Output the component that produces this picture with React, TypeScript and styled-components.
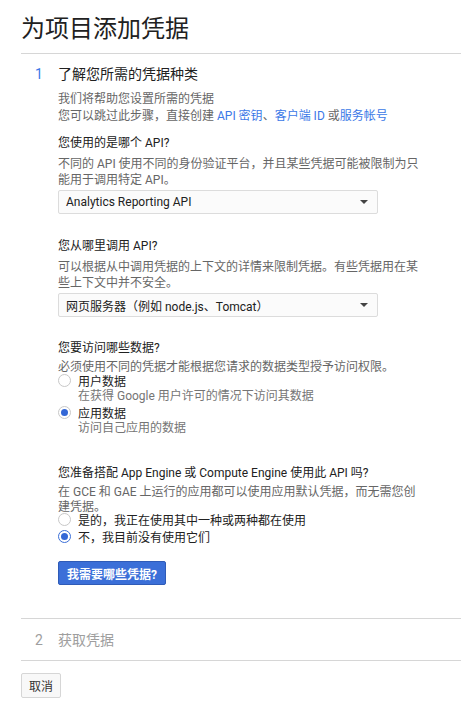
import React from "react";
import styled, { createGlobalStyle } from "styled-components";

const Global = createGlobalStyle`
  html, body { margin: 0; padding: 0; background: #fff; }
  body {
    font-family: Roboto, "Noto Sans CJK SC", "Liberation Sans", sans-serif;
    color: #212121;
    -webkit-font-smoothing: antialiased;
  }
`;

const Page = styled.div`
  padding: 0 13px 0 21px;
`;

const Header = styled.header`
  padding-top: 13px;
  padding-bottom: 7px;
  border-bottom: 1px solid #d6d6d6;
`;

const Title = styled.h1`
  margin: 0;
  font-size: 24px;
  font-weight: 400;
  line-height: 33px;
  color: #212121;
`;

const Step = styled.section<{ $last?: boolean }>`
  padding: ${(p) => (p.$last ? "11px 0 10px" : "10px 0 33px")};
  border-bottom: 1px solid #d6d6d6;
`;

const StepHead = styled.div<{ $muted?: boolean }>`
  display: flex;
  align-items: center;
  height: 20px;
  font-size: 14px;
  line-height: 20px;
  color: ${(p) => (p.$muted ? "#9e9e9e" : "#212121")};
`;

const StepNum = styled.span<{ $muted?: boolean }>`
  width: 37px;
  padding-left: 14px;
  box-sizing: border-box;
  color: ${(p) => (p.$muted ? "#9e9e9e" : "#3b78e7")};
  font-size: 14px;
`;

const StepBody = styled.div`
  padding-left: 37px;
`;

const Intro = styled.p`
  margin: 7px 0 0;
  font-size: 12px;
  line-height: 17px;
  color: #666;
`;

const Link = styled.a`
  color: #3b78e7;
  text-decoration: none;
`;

const Question = styled.div<{ $mt: number }>`
  margin-top: ${(p) => p.$mt}px;
  width: 362px;
`;

const Label = styled.div`
  font-size: 12px;
  line-height: 17px;
  color: #212121;
`;

const Desc = styled.div<{ $mt?: number; $lh?: number }>`
  margin-top: ${(p) => p.$mt ?? 4}px;
  font-size: 12px;
  line-height: ${(p) => p.$lh ?? 16}px;
  color: #666;
`;

const Select = styled.div`
  margin-top: 2px;
  width: 320px;
  height: 24px;
  box-sizing: border-box;
  border: 1px solid #dcdcdc;
  border-radius: 2px;
  background: #fbfbfb;
  display: flex;
  align-items: center;
  justify-content: space-between;
  padding: 0 9px 0 7px;
  font-size: 12px;
  color: #212121;
`;

const Caret = styled.span`
  width: 0;
  height: 0;
  border-left: 4px solid transparent;
  border-right: 4px solid transparent;
  border-top: 4px solid #444;
`;

const RadioGroup = styled.div<{ $mt?: number }>`
  margin-top: ${(p) => p.$mt ?? 0}px;
  display: flex;
  flex-direction: column;
`;

const RadioRow = styled.label<{ $h?: number }>`
  display: flex;
  align-items: center;
  height: ${(p) => p.$h ?? 16}px;
  font-size: 12px;
  color: #212121;
`;

const Circle = styled.span<{ $checked?: boolean; $focus?: boolean }>`
  width: 13px;
  height: 13px;
  box-sizing: border-box;
  border-radius: 50%;
  border: 1px solid ${(p) => (p.$focus ? "#3b6fd8" : "#c8c8c8")};
  background: #fff;
  margin-right: 7px;
  display: flex;
  align-items: center;
  justify-content: center;
  flex: none;
  &::after {
    content: "";
    width: 7px;
    height: 7px;
    border-radius: 50%;
    background: ${(p) => (p.$checked ? "#3367d6" : "transparent")};
  }
`;

const RadioDesc = styled.div`
  padding-left: 20px;
  font-size: 12px;
  line-height: 16px;
  height: 16px;
  color: #757575;
`;

const PrimaryButton = styled.button`
  margin-top: 16px;
  height: 24px;
  padding: 0 8px;
  border: 1px solid #2f5bb7;
  border-radius: 2px;
  background: #3b6fd8;
  color: #fff;
  font-family: inherit;
  font-size: 12px;
  font-weight: 700;
  cursor: pointer;
`;

const Footer = styled.div`
  padding-top: 12px;
`;

const CancelButton = styled.button`
  height: 25px;
  width: 40px;
  padding: 0;
  border: 1px solid #d6d6d6;
  border-radius: 2px;
  background: #f8f8f8;
  color: #333;
  font-family: inherit;
  font-size: 12px;
  cursor: pointer;
`;

export default function App() {
  return (
    <>
      <Global />
      <Page>
        <Header>
          <Title>为项目添加凭据</Title>
        </Header>

        <Step>
          <StepHead>
            <StepNum>1</StepNum>
            <span>了解您所需的凭据种类</span>
          </StepHead>
          <StepBody>
            <Intro>
              我们将帮助您设置所需的凭据
              <br />
              您可以跳过此步骤，直接创建 <Link href="#">API 密钥</Link>、
              <Link href="#">客户端 ID</Link> 或<Link href="#">服务帐号</Link>
            </Intro>

            <Question $mt={10}>
              <Label>您使用的是哪个 API?</Label>
              <Desc>不同的 API 使用不同的身份验证平台，并且某些凭据可能被限制为只能用于调用特定 API。</Desc>
              <Select>
                <span>Analytics Reporting API</span>
                <Caret />
              </Select>
            </Question>

            <Question $mt={24}>
              <Label>您从哪里调用 API?</Label>
              <Desc>可以根据从中调用凭据的上下文的详情来限制凭据。有些凭据用在某些上下文中并不安全。</Desc>
              <Select>
                <span>网页服务器（例如 node.js、Tomcat）</span>
                <Caret />
              </Select>
            </Question>

            <Question $mt={23}>
              <Label>您要访问哪些数据?</Label>
              <Desc $mt={2}>必须使用不同的凭据才能根据您请求的数据类型授予访问权限。</Desc>
              <RadioGroup $mt={-3}>
                <RadioRow $h={16}>
                  <Circle />
                  用户数据
                </RadioRow>
                <RadioDesc>在获得 Google 用户许可的情况下访问其数据</RadioDesc>
                <RadioRow $h={16}>
                  <Circle $checked />
                  应用数据
                </RadioRow>
                <RadioDesc>访问自己应用的数据</RadioDesc>
              </RadioGroup>
            </Question>

            <Question $mt={29}>
              <Label>您准备搭配 App Engine 或 Compute Engine 使用此 API 吗?</Label>
              <Desc $mt={3} $lh={15}>在 GCE 和 GAE 上运行的应用都可以使用应用默认凭据，而无需您创建凭据。</Desc>
              <RadioGroup $mt={-4}>
                <RadioRow $h={17}>
                  <Circle />
                  是的，我正在使用其中一种或两种都在使用
                </RadioRow>
                <RadioRow $h={17}>
                  <Circle $checked $focus />
                  不，我目前没有使用它们
                </RadioRow>
              </RadioGroup>
            </Question>

            <PrimaryButton>我需要哪些凭据?</PrimaryButton>
          </StepBody>
        </Step>

        <Step $last>
          <StepHead $muted>
            <StepNum $muted>2</StepNum>
            <span>获取凭据</span>
          </StepHead>
        </Step>

        <Footer>
          <CancelButton>取消</CancelButton>
        </Footer>
      </Page>
    </>
  );
}
